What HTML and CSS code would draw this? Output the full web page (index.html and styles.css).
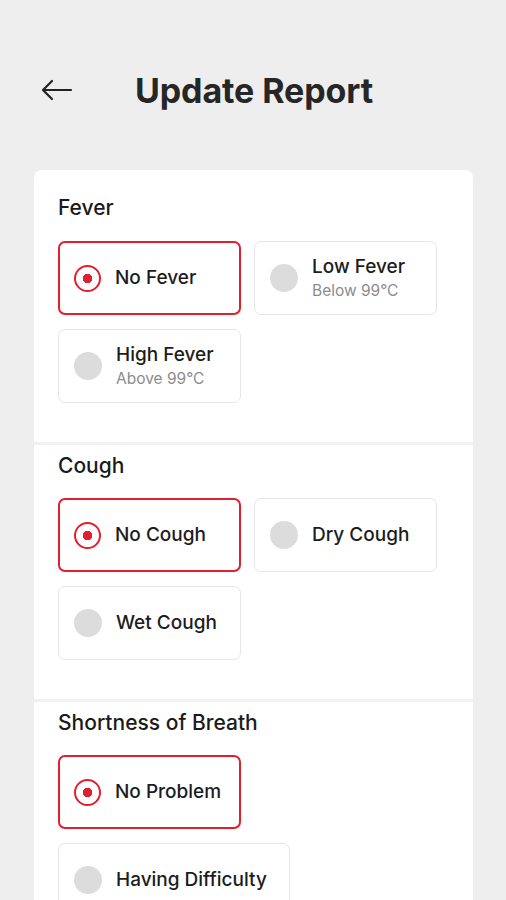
FILE: index.html
```html
<!DOCTYPE html>
<html lang="en">
  <head>
    <meta charset="UTF-8" />
    <meta name="viewport" content="width=device-width, initial-scale=1.0" />
    <title>Update Report</title>
    <link rel="stylesheet" href="styles.css">
  </head>
  <body>
    <header class="topbar">
      <button class="back" aria-label="Back">
        <svg width="32" height="22" viewBox="0 0 32 22" fill="none" stroke="#222" stroke-width="2.2" stroke-linecap="round" stroke-linejoin="round">
          <path d="M2 11h28M11 2 2 11l9 9" />
        </svg>
      </button>
      <h1>Update Report</h1>
    </header>

    <main class="card">
      <section class="group first">
        <h2>Fever</h2>
        <div class="options">
          <label class="option selected">
            <span class="radio"></span>
            <span class="text"><span class="title">No Fever</span></span>
          </label>
          <label class="option">
            <span class="radio"></span>
            <span class="text">
              <span class="title">Low Fever</span>
              <span class="sub">Below 99°C</span>
            </span>
          </label>
          <label class="option">
            <span class="radio"></span>
            <span class="text">
              <span class="title">High Fever</span>
              <span class="sub">Above 99°C</span>
            </span>
          </label>
        </div>
      </section>

      <section class="group">
        <h2>Cough</h2>
        <div class="options">
          <label class="option selected">
            <span class="radio"></span>
            <span class="text"><span class="title">No Cough</span></span>
          </label>
          <label class="option">
            <span class="radio"></span>
            <span class="text"><span class="title">Dry Cough</span></span>
          </label>
          <label class="option">
            <span class="radio"></span>
            <span class="text"><span class="title">Wet Cough</span></span>
          </label>
        </div>
      </section>

      <section class="group">
        <h2>Shortness of Breath</h2>
        <div class="options">
          <label class="option selected">
            <span class="radio"></span>
            <span class="text"><span class="title">No Problem</span></span>
          </label>
          <label class="option">
            <span class="radio"></span>
            <span class="text"><span class="title">Having Difficulty</span></span>
          </label>
        </div>
      </section>
    </main>
  </body>
</html>
```

FILE: styles.css
```css
body {
  margin: 0;
  background-color: #efeeee;
  font-family: Inter, "Noto Sans", sans-serif;
  color: #1c1c1c;
}

.topbar {
  display: flex;
  align-items: center;
  height: 170px;
  padding: 40px 0 30px 41px;
  box-sizing: border-box;
}

.back {
  display: flex;
  padding: 0;
  border: none;
  background: none;
}

.topbar h1 {
  margin: 0 0 0 62px;
  font-size: 34px;
  font-weight: 700;
  color: #262626;
  letter-spacing: -0.1px;
}

.card {
  margin: 0 33px 0 34px;
  background-color: #fff;
  border-radius: 8px 8px 0 0;
}

.group {
  padding: 7px 24px 39px;
  border-top: 3px solid #f1f1f1;
}

.group.first {
  padding-top: 24px;
  border-top: none;
}

.group h2 {
  margin: 0 0 18px;
  font-size: 21px;
  line-height: 28px;
  font-weight: 500;
  color: #1a1a1a;
}

.group.first h2 {
  margin-bottom: 19px;
}

.options {
  display: flex;
  flex-wrap: wrap;
  gap: 14px 13px;
}

.option {
  display: flex;
  align-items: center;
  gap: 14px;
  min-width: 183px;
  height: 74px;
  padding: 0 22px 0 15px;
  box-sizing: border-box;
  border: 1px solid #e6e6e6;
  border-radius: 7px;
}

.option.selected {
  border: 2px solid #e21f2e;
  padding-left: 14px;
  padding-right: 18px;
}

.radio {
  flex: none;
  width: 28px;
  height: 28px;
  border-radius: 50%;
  background-color: #dcdcdc;
}

.selected .radio {
  box-sizing: border-box;
  width: 27px;
  height: 27px;
  border: 2.5px solid #e21f2e;
  background: radial-gradient(circle, #e21f2e 0 4.5px, #fff 5px);
}

.text {
  display: flex;
  flex-direction: column;
}

.title {
  font-size: 19px;
  line-height: 26px;
  font-weight: 500;
  color: #1c1c1c;
}

.sub {
  font-size: 15.5px;
  line-height: 22px;
  color: #8c8c8c;
}
```
